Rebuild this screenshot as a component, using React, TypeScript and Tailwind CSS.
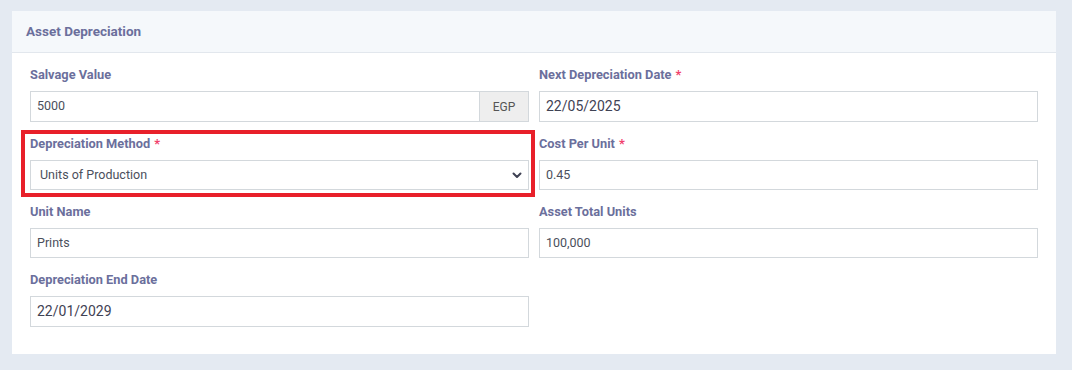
import { ReactNode } from "react";

function Label({ text, required }: { text: string; required?: boolean }) {
  return (
    <div className="mb-2 h-4 text-[12.8px] leading-4 font-bold text-[#6b6f9c]">
      {text}
      {required && <span className="ml-1 text-[#f1416c]">*</span>}
    </div>
  );
}

function Field({ label, required, children }: { label: string; required?: boolean; children: ReactNode }) {
  return (
    <div className="flex flex-col">
      <Label text={label} required={required} />
      {children}
    </div>
  );
}

function TextBox({ value, date }: { value: string; date?: boolean }) {
  return (
    <div
      className={
        date
          ? "flex h-[31px] items-center border border-[#d3d8dc] bg-white px-[6px] text-[14px] text-[#3f4254]"
          : "flex h-[30px] items-center border border-[#d3d8dc] bg-white px-[6px] text-[12.5px] text-[#4b4f5c]"
      }
    >
      {value}
    </div>
  );
}

export default function App() {
  return (
    <div className="h-[370px] w-[1072px] bg-[#e4eaf2] pt-[11px] pl-[12px] font-['Roboto',sans-serif]">
      <div className="w-[1044px] bg-white">
        <div className="flex h-[42px] items-center border-b border-[#e2e7ed] bg-[#f5f8fb] px-[14px] text-[13.5px] font-bold text-[#6b6f9c]">
          Asset Depreciation
        </div>

        <div className="relative grid grid-cols-2 gap-x-[10px] gap-y-[14px] px-[18px] pt-[14px] pb-[27px]">
          <Field label="Salvage Value">
            <div className="flex h-[31px] border border-[#d3d8dc] bg-white text-[12.5px] text-[#4b4f5c]">
              <div className="flex flex-1 items-center px-[6px]">5000</div>
              <div className="flex w-[49px] items-center justify-center border-l border-[#d3d8dc] bg-[#eeeeee] text-[12px] text-[#555]">
                EGP
              </div>
            </div>
          </Field>
          <Field label="Next Depreciation Date" required>
            <TextBox value="22/05/2025" date />
          </Field>

          <Field label="Depreciation Method" required>
            <div className="flex h-[30px] items-center justify-between border border-[#d3d8dc] bg-white pr-[5px] pl-[9px] text-[12.5px] text-[#4b4f5c]">
              <span>Units of Production</span>
              <svg width="12" height="12" viewBox="0 0 12 12" fill="none">
                <path d="M2.5 4.5 6 8l3.5-3.5" stroke="#3f4254" strokeWidth="2" strokeLinecap="round" strokeLinejoin="round" />
              </svg>
            </div>
          </Field>
          <Field label="Cost Per Unit" required>
            <TextBox value="0.45" />
          </Field>

          <Field label="Unit Name">
            <TextBox value="Prints" />
          </Field>
          <Field label="Asset Total Units">
            <TextBox value="100,000" />
          </Field>

          <Field label="Depreciation End Date">
            <TextBox value="22/01/2029" date />
          </Field>
          <div />

          {/* highlight around the method field */}
          <div className="pointer-events-none absolute top-[77px] left-[9px] h-[67px] w-[514px] border-4 border-[#e8202a]" />
        </div>
      </div>
    </div>
  );
}
